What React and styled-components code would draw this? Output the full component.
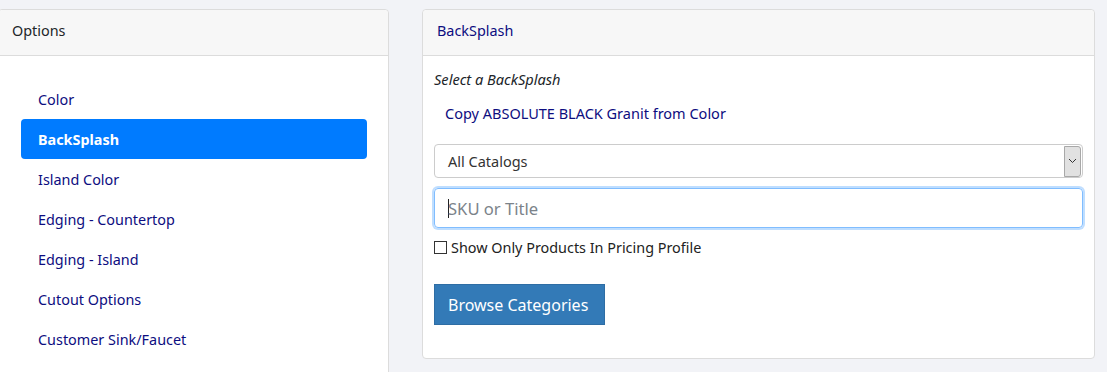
import React from "react";
import styled, { createGlobalStyle } from "styled-components";

const GlobalStyle = createGlobalStyle`
  html, body {
    margin: 0;
    padding: 0;
    background: #f2f3f7;
    font-family: "Noto Sans", "Open Sans", Arial, sans-serif;
  }
`;

const options = [
  "Color",
  "BackSplash",
  "Island Color",
  "Edging - Countertop",
  "Edging - Island",
  "Cutout Options",
  "Customer Sink/Faucet",
];

const Page = styled.div`
  display: grid;
  grid-template-columns: 389px 673px;
  column-gap: 33px;
  align-items: start;
  padding-top: 9px;
  height: 363px;
  overflow: hidden;
`;

const Card = styled.div`
  background: #fff;
  border: 1px solid #dcdcdc;
  border-radius: 4px;
  margin-left: ${(p) => (p.$bleed ? "-2px" : "0")};
  height: ${(p) => (p.$tall ? "400px" : "auto")};
`;

const CardHeader = styled.div`
  height: 46px;
  box-sizing: border-box;
  padding: 11px ${(p) => (p.$pad ? p.$pad : "13px")} 0;
  line-height: 20px;
  background: #f7f7f7;
  border-bottom: 1px solid #dcdcdc;
  border-radius: 4px 4px 0 0;
  font-size: 14.4px;
  color: ${(p) => (p.$navy ? "#0d0d80" : "#212529")};
`;

const Nav = styled.ul`
  list-style: none;
  margin: 0;
  padding: 23px 21px 0 22px;
  display: flex;
  flex-direction: column;
`;

const NavItem = styled.li`
  height: 40px;
  display: flex;
  align-items: center;
  padding-left: 17px;
  border-radius: 4px;
  font-size: 14.4px;
  font-weight: ${(p) => (p.$active ? 700 : 400)};
  color: ${(p) => (p.$active ? "#fff" : "#0d0d80")};
  background: ${(p) => (p.$active ? "#007bff" : "transparent")};
`;

const Body = styled.div`
  padding: 13px 11px 33px 11px;
  display: flex;
  flex-direction: column;
`;

const Hint = styled.div`
  font-style: italic;
  font-size: 14.6px;
  color: #212529;
  line-height: 20px;
`;

const CopyLink = styled.div`
  margin-top: 14px;
  padding-left: 11px;
  font-size: 14.5px;
  line-height: 20px;
  color: #0d0d80;
`;

const Select = styled.div`
  margin-top: 21px;
  height: 34px;
  box-sizing: border-box;
  border: 1px solid #ccc;
  border-radius: 4px;
  display: flex;
  align-items: center;
  justify-content: space-between;
  padding: 0 1px 0 13px;
  font-size: 14.5px;
  color: #333;
`;

const SelectButton = styled.span`
  width: 17px;
  height: 31px;
  box-sizing: border-box;
  background: #e1e1e1;
  border: 1px solid #a8a8a8;
  border-radius: 0 3px 3px 0;
  display: flex;
  align-items: center;
  justify-content: center;
`;

const Input = styled.div`
  margin-top: 10px;
  height: 40px;
  box-sizing: border-box;
  border: 1px solid #80bdff;
  border-radius: 4px;
  box-shadow: 0 0 0 2px rgba(0, 123, 255, 0.25);
  display: flex;
  align-items: center;
  padding-left: 13px;
  font-size: 16.6px;
  color: #7b838a;
`;

const Caret = styled.span`
  display: inline-block;
  width: 1px;
  height: 19px;
  background: #222;
  margin-right: -1px;
`;

const CheckRow = styled.label`
  margin-top: 10px;
  display: flex;
  align-items: center;
  gap: 4px;
  font-size: 14.4px;
  color: #222;
`;

const Box = styled.span`
  width: 13px;
  height: 13px;
  box-sizing: border-box;
  border: 1px solid #333;
  background: #fff;
`;

const Button = styled.button`
  margin-top: 27px;
  align-self: flex-start;
  width: 171px;
  height: 41px;
  border: 1px solid #2e6da4;
  border-radius: 0;
  background: #337ab7;
  color: #fff;
  font-family: inherit;
  font-size: 16px;
  padding: 0 13px;
  text-align: left;
`;

export default function App() {
  return (
    <>
      <GlobalStyle />
      <Page>
        <Card $bleed $tall>
          <CardHeader>Options</CardHeader>
          <Nav>
            {options.map((o) => (
              <NavItem key={o} $active={o === "BackSplash"}>
                {o}
              </NavItem>
            ))}
          </Nav>
        </Card>
        <Card>
          <CardHeader $navy $pad="14px">BackSplash</CardHeader>
          <Body>
            <Hint>Select a BackSplash</Hint>
            <CopyLink>Copy ABSOLUTE BLACK Granit from Color</CopyLink>
            <Select>
              All Catalogs
              <SelectButton>
                <svg width="9" height="6" viewBox="0 0 9 6">
                  <path d="M1 1l3.5 3.5L8 1" fill="none" stroke="#333" strokeWidth="1" />
                </svg>
              </SelectButton>
            </Select>
            <Input>
              <Caret />
              SKU or Title
            </Input>
            <CheckRow>
              <Box />
              Show Only Products In Pricing Profile
            </CheckRow>
            <Button>Browse Categories</Button>
          </Body>
        </Card>
      </Page>
    </>
  );
}
